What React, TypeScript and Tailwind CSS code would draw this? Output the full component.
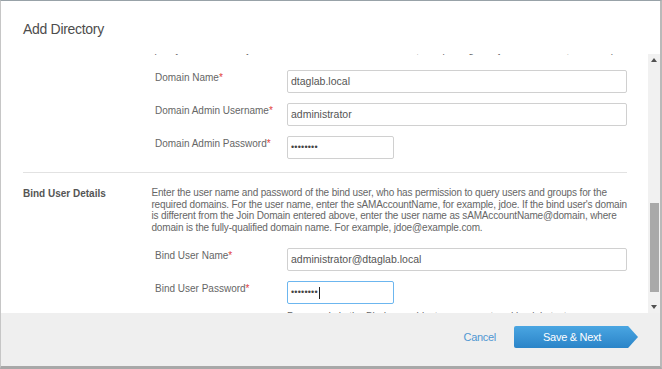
import React from "react";

const font = { fontFamily: '"Liberation Sans", Arial, sans-serif' };

function Req() {
  return <span className="text-[#e2413b]">*</span>;
}

function FieldRow({
  label,
  value,
  short,
  focused,
  password,
}: {
  label: string;
  value: string;
  short?: boolean;
  focused?: boolean;
  password?: boolean;
}) {
  return (
    <div className="flex items-start">
      <div className="w-[132px] pt-[1px] text-[10px] leading-[13px] text-[#666]">
        {label}
        <Req />
      </div>
      <div
        className={`h-[23px] flex items-center px-[3px] rounded-[2px] border ${
          short ? "w-[107px]" : "w-[340px]"
        } ${focused ? "border-[#6cb6ef]" : "border-[#d0d0d0]"}`}
      >
        {password ? (
          <span className="flex items-center text-[9px] tracking-[0.2px] text-[#444] leading-none">
            ••••••••
            {focused && <span className="inline-block w-px h-[12px] bg-[#222] ml-[1px]" />}
          </span>
        ) : (
          <span className="text-[10.5px] text-[#555]">{value}</span>
        )}
      </div>
    </div>
  );
}

export default function App() {
  return (
    <div
      style={font}
      className="w-[662px] h-[369px] overflow-hidden flex flex-col bg-white border-t border-t-[#98a2a8] border-l border-l-[#c6c6c6] border-r-2 border-r-[#b9b9b9] border-b-[3px] border-b-[#a8a8a8]"
    >
      {/* header */}
      <div className="h-[53px] shrink-0 flex items-center pl-[22px] pt-[3px]">
        <h1 className="text-[14px] tracking-[-0.3px] text-[#4d4d4d]">Add Directory</h1>
      </div>

      {/* scrolled body */}
      <div className="h-[259px] shrink-0 flex">
        <div className="flex-1 overflow-hidden pl-[22px] pr-[21px]">
          <div className="-mt-[10px] flex h-[12px] text-[10px] leading-[12px]">
            <div className="w-[132px] font-bold text-[#555] whitespace-nowrap">Join Domain Details</div>
            <div className="text-[#666] whitespace-nowrap">
              Specify the domain to join and enter the credentials of a user, with privileges to join the domain, for example.
            </div>
          </div>

          <div className="mt-[14px] pl-[132px] flex flex-col gap-[10px]">
            <FieldRow label="Domain Name" value="dtaglab.local" />
            <FieldRow label="Domain Admin Username" value="administrator" />
            <FieldRow label="Domain Admin Password" value="" short password />
          </div>

          <div className="mt-[13px] border-t border-[#e2e2e2]" />

          <div className="mt-[14px] flex">
            <div className="w-[132px] text-[10px] leading-[13px] font-bold text-[#555]">
              Bind User Details
            </div>
            <p className="text-[10px] leading-[11.5px] text-[#666] whitespace-nowrap tracking-[-0.15px]">
              Enter the user name and password of the bind user, who has permission to query users and groups for the
              <br />
              required domains. For the user name, enter the sAMAccountName, for example, jdoe. If the bind user's domain
              <br />
              is different from the Join Domain entered above, enter the user name as sAMAccountName@domain, where
              <br />
              domain is the fully-qualified domain name. For example, jdoe@example.com.
            </p>
          </div>

          <div className="mt-[15px] pl-[132px] flex flex-col gap-[10px]">
            <FieldRow label="Bind User Name" value="administrator@dtaglab.local" />
            <FieldRow label="Bind User Password" value="" short password focused />
            <div className="pl-[132px] text-[10px] leading-[12px] text-[#666] whitespace-nowrap -mt-[3px]">
              Passwords in the Bind user object are never stored in plain text.
            </div>
          </div>
        </div>

        {/* scrollbar */}
        <div className="w-[12px] shrink-0 bg-[#f1f1f1] flex flex-col items-center">
          <div className="h-[12px] flex items-center justify-center">
            <svg width="6" height="4" viewBox="0 0 6 4">
              <path d="M0 4 L3 0 L6 4 Z" fill="#505050" />
            </svg>
          </div>
          <div className="h-[137px]" />
          <div className="w-[9px] h-[89px] bg-[#a9a9a9]" />
          <div className="flex-1" />
          <div className="h-[12px] flex items-center justify-center">
            <svg width="6" height="4" viewBox="0 0 6 4">
              <path d="M0 0 L6 0 L3 4 Z" fill="#505050" />
            </svg>
          </div>
        </div>
      </div>

      {/* footer */}
      <div className="flex-1 bg-[#efefef] flex items-start justify-end pr-[22px] pt-[13px] gap-[18px]">
        <button className="h-[22px] text-[11px] tracking-[-0.3px] text-[#4f97d2]">Cancel</button>
        <button className="w-[124px] h-[22px] text-white text-[11px] tracking-[-0.3px] bg-gradient-to-b from-[#4aa6e2] to-[#2a84c8] rounded-l-[2px] [clip-path:polygon(0_0,92%_0,100%_50%,92%_100%,0_100%)] pr-[8px]">
          Save &amp; Next
        </button>
      </div>
    </div>
  );
}
